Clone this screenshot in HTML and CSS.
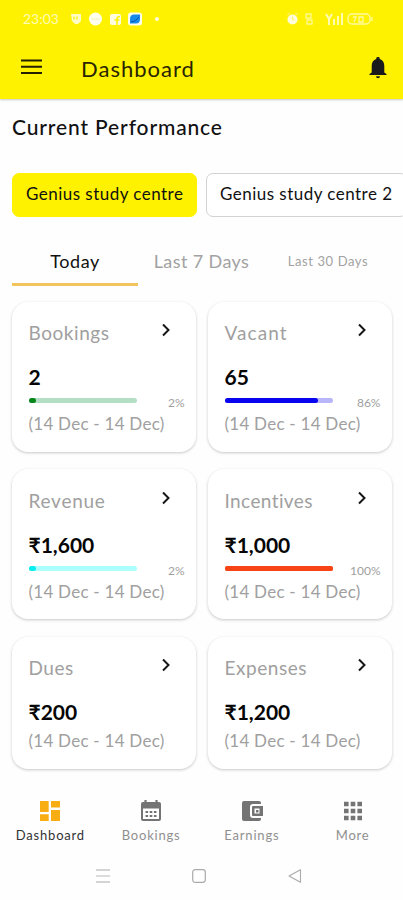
FILE: index.html
```
<!DOCTYPE html>
<html lang="en">
<head>
<meta charset="utf-8">
<title>Dashboard</title>
<link rel="stylesheet" href="styles.css">
</head>
<body>
<header class="top">
  <div class="status">
    <span class="clock">23:03</span>
    <svg class="apps" width="92" height="14" viewBox="0 0 92 14">
      <path d="M2 2h10v7l-3 3H6L3 9z" fill="#fffcc5"/><path d="M5 4.500v3M8 4.500v3" stroke="#fff200" stroke-width="1.300"/>
      <circle cx="26.500" cy="7" r="6.500" fill="#fffff0"/><path d="M22.500 7h8" stroke="#f3efb2"/>
      <rect x="41" y="2" width="11" height="11" rx="2" fill="#fffde0"/><path d="M48 13V6.500q0-2 3-2M45.500 8h5" fill="none" stroke="#fff200" stroke-width="1.600"/>
      <rect x="59" y="0.500" width="14" height="13" rx="3" fill="#fffff0"/><path d="M61 11.500V7q0-4.500 4-4.500h6v4.500q0 4.500-4 4.500z" fill="#168bea"/><path d="M62 10q5 0 8-5" stroke="#0754ae" fill="none"/>
      <circle cx="88" cy="7" r="2" fill="#fffde0"/>
    </svg>
    <svg class="signals" width="88" height="14" viewBox="0 0 88 14">
      <circle cx="5.500" cy="7.500" r="5" fill="#fffde0"/><path d="M5.500 4.500v3l2 1M.5 3l2-2M10.500 3L8.500 1" fill="none" stroke="#fff36b" stroke-width="1.200"/>
      <path d="M19 2h5v4h-5zM20 8h5v4h-5z" fill="none" stroke="#fff990" stroke-width="1.300"/>
      <path d="M39 2l3 5 3-5M42 7v6M47 13V7M51 13V4M55 13V1" fill="none" stroke="#fffbb0" stroke-width="2"/>
      <rect x="61" y="2" width="22" height="10" rx="4" fill="none" stroke="#fffaa0" stroke-width="1.400"/><path d="M66 5h3l-2 5M72 5h4v5h-4zM85 5v4" fill="none" stroke="#fffaa0" stroke-width="1.300"/>
    </svg>
  </div>
  <div class="appbar">
    <svg class="menu" width="22" height="16" viewBox="0 0 22 16"><path d="M0 1.500h21M0 7.800h21M0 14h21" stroke="#222000" stroke-width="1.900"/></svg>
    <h1>Dashboard</h1>
    <svg class="bell" width="18" height="22" viewBox="0 0 18 22"><path d="M9 0a1.700 1.700 0 0 0-1.700 2C4.300 2.800 2.700 5.500 2.700 9v6.500L.5 17v1h17v-1l-2.200-1.500V9c0-3.500-1.600-6.200-4.600-7A1.700 1.700 0 0 0 9 0z" fill="#1a1a1c"/><path d="M7 19.300h4a2 2 0 0 1-4 0z" fill="#1a1a1c"/></svg>
  </div>
</header>
<main>
  <h2>Current Performance</h2>
  <div class="chips">
    <div class="chip chip-on"><span>Genius study centre</span></div>
    <div class="chip chip-next"><span>Genius study centre 2</span></div>
  </div>
  <div class="tabs">
    <div class="tab tab-on"><span>Today</span></div>
    <div class="tab tab-week"><span>Last 7 Days</span></div>
    <div class="tab tab-month"><span>Last 30 Days</span></div>
  </div>
  <div class="grid">
    <section class="card">
      <div class="head"><span class="w-bookings">Bookings</span><svg class="chev" width="10" height="14" viewBox="0 0 10 14"><path d="M2 1.500l5.500 5.500L2 12.500" /></svg></div>
      <div class="value">2</div>
      <div class="meter"><div class="track green"><i style="width:7px"></i></div><span>2%</span></div>
      <div class="date">(14 Dec - 14 Dec)</div>
    </section>
    <section class="card">
      <div class="head"><span class="w-vacant">Vacant</span><svg class="chev" width="10" height="14" viewBox="0 0 10 14"><path d="M2 1.500l5.500 5.500L2 12.500" /></svg></div>
      <div class="value">65</div>
      <div class="meter"><div class="track blue"><i style="width:87%"></i></div><span>86%</span></div>
      <div class="date">(14 Dec - 14 Dec)</div>
    </section>
    <section class="card">
      <div class="head"><span class="w-revenue">Revenue</span><svg class="chev" width="10" height="14" viewBox="0 0 10 14"><path d="M2 1.500l5.500 5.500L2 12.500" /></svg></div>
      <div class="value money">₹1,600</div>
      <div class="meter"><div class="track cyan"><i style="width:7px"></i></div><span>2%</span></div>
      <div class="date">(14 Dec - 14 Dec)</div>
    </section>
    <section class="card">
      <div class="head"><span class="w-incentives">Incentives</span><svg class="chev" width="10" height="14" viewBox="0 0 10 14"><path d="M2 1.500l5.500 5.500L2 12.500" /></svg></div>
      <div class="value money">₹1,000</div>
      <div class="meter"><div class="track red"><i style="width:100%"></i></div><span>100%</span></div>
      <div class="date">(14 Dec - 14 Dec)</div>
    </section>
    <section class="card short">
      <div class="head"><span class="w-dues">Dues</span><svg class="chev" width="10" height="14" viewBox="0 0 10 14"><path d="M2 1.500l5.500 5.500L2 12.500" /></svg></div>
      <div class="value money">₹200</div>
      <div class="date">(14 Dec - 14 Dec)</div>
    </section>
    <section class="card short">
      <div class="head"><span class="w-expenses">Expenses</span><svg class="chev" width="10" height="14" viewBox="0 0 10 14"><path d="M2 1.500l5.500 5.500L2 12.500" /></svg></div>
      <div class="value money">₹1,200</div>
      <div class="date">(14 Dec - 14 Dec)</div>
    </section>
  </div>
</main>
<nav class="bottom">
  <div class="item active">
    <svg width="22" height="22" viewBox="0 0 22 22" fill="#f8ae13"><path d="M1 1h8.700v11H1zM12 1h9v6.500h-9zM1 14.300h8.700V21H1zM12 10h9v11h-9z"/></svg>
    <span>Dashboard</span>
  </div>
  <div class="item">
    <svg width="22" height="24" viewBox="0 0 22 24"><path d="M3 3h16q2 0 2 2v15q0 2-2 2H3q-2 0-2-2V5q0-2 2-2z" fill="#747474"/><path d="M5.500 1v4M16.500 1v4" stroke="#747474" stroke-width="2.200"/><path d="M3 9.500h16V20H3z" fill="#fff"/><path d="M5.500 13h11M5.500 17h11" stroke="#747474" stroke-width="2.200" stroke-dasharray="2.600 1.600"/></svg>
    <span>Bookings</span>
  </div>
  <div class="item">
    <svg width="24" height="22" viewBox="0 0 24 22"><path d="M4 1h15q2 0 2 2v1h-8q-3 0-3 3v8q0 3 3 3h8v1q0 2-2 2H4q-2 0-2-2V3q0-2 2-2z" fill="#747474"/><path d="M13 6h10v10H13q-1 0-1-1V7q0-1 1-1z" fill="#747474"/><rect x="14.500" y="8.500" width="5" height="5" fill="#fff"/><rect x="16" y="10" width="2.500" height="2.500" fill="#747474"/></svg>
    <span>Earnings</span>
  </div>
  <div class="item">
    <svg width="20" height="22" viewBox="0 0 20 22"><path d="M1 4h18M1 11h18M1 18h18" stroke="#747474" stroke-width="4.400" stroke-dasharray="4.600 2.100"/></svg>
    <span>More</span>
  </div>
</nav>
<footer class="system">
  <svg width="14" height="14" viewBox="0 0 14 14"><path d="M0 1h14M0 13h14" stroke="#aaa" stroke-width="1.200"/><path d="M0 7h14" stroke="#ccc" stroke-width="1.400"/></svg>
  <svg width="14" height="14" viewBox="0 0 14 14"><rect x=".7" y=".7" width="12.600" height="12.600" rx="2.500" fill="none" stroke="#aaa" stroke-width="1.200"/></svg>
  <svg width="14" height="14" viewBox="0 0 14 14"><path d="M1 7l11.500-6.200v12.400z" fill="none" stroke="#aaa" stroke-width="1.100" stroke-linejoin="round"/></svg>
</footer>
</body>
</html>
```
FILE: styles.css
```
* { box-sizing: border-box; }
body { margin: 0; width: 403px; height: 900px; overflow: hidden; background: #fefefe; font-family: Lato, sans-serif; color: #111; display: flex; flex-direction: column; }
svg { display: block; flex: none; }
span, h1, h2 { white-space: nowrap; }
.top { height: 99px; flex: none; background: #fff200; box-shadow: 0 1px 2px rgba(0,0,0,.22); }
.status { height: 37px; display: flex; align-items: center; padding: 0 28px 0 23px; }
.clock { width: 46px; font-size: 14px; color: #fffcb8; }
.signals { margin-left: auto; }
.appbar { height: 62px; display: flex; align-items: center; padding: 0 16px 0 21px; }
.menu { margin-bottom: 2px; }
h1 { margin: 1px 0 0 38px; font-size: 22px; font-weight: 400; line-height: 28px; letter-spacing: 1px; color: #282500; }
.bell { margin-left: auto; }
main { height: 689px; flex: none; display: flex; flex-direction: column; }
h2 { margin: 13px 0 0 12px; font-size: 21px; font-weight: 500; line-height: 30px; letter-spacing: .86px; }
.chips { display: flex; gap: 9px; margin: 31px 0 0 12px; overflow: hidden; width: 391px; }
.chip { width: 185px; height: 44px; flex: none; border-radius: 7px; border: 1px solid #d2d2d2; padding: 0 13px; font-size: 17px; line-height: 39px; letter-spacing: .47px; background: #fff; }
.chip-on { background: #fff200; border-color: #fff200; }
.chip-next { width: 201px; }
.tabs { display: grid; grid-template-columns: 126px 127px 126px; margin: 26px 0 0 12px; height: 43px; }
.tab { text-align: center; font-size: 18px; line-height: 36px; color: #a2a2a2; letter-spacing: .4px; }
.tab-on { color: #111; border-bottom: 3px solid #f2c45e; letter-spacing: .6px; }
.tab-month { font-size: 13px; letter-spacing: .6px; }
.grid { display: grid; grid-template-columns: 184px 184px; gap: 17.500px 12px; margin: 15.500px 0 0 11.500px; }
.card { height: 150px; border-radius: 16px; background: #fff; box-shadow: 0 1px 3px rgba(0,0,0,.22); padding: 16.500px 11px 0 17px; }
.short { height: 132px; }
.head { display: flex; justify-content: space-between; height: 30px; font-size: 19px; line-height: 30px; color: #a0a0a0; padding-right: 14px; letter-spacing: .55px; }
.w-vacant { letter-spacing: 1.050px; }
.w-revenue { letter-spacing: .75px; }
.w-incentives { letter-spacing: .4px; }
.chev { margin-top: 5px; fill: none; stroke: #161616; stroke-width: 2; }
.value { margin-top: 13px; height: 34px; line-height: 32px; font-size: 21px; font-weight: 700; color: #050505; }
.meter { height: 10px; display: flex; justify-content: space-between; color: #a0a0a0; font-size: 12px; line-height: 12px; }
.track { width: 108px; height: 5px; margin-top: 3px; border-radius: 3px; flex: none; }
.track i { display: block; height: 5px; border-radius: 3px; }
.green { background: #b5dfc4; } .green i { background: #078619; }
.blue { background: #b9b5fb; } .blue i { background: #0804ef; }
.cyan { background: #acffff; } .cyan i { background: #08eeee; }
.red { background: #f64416; } .red i { background: #f64416; }
.date { height: 24px; line-height: 24px; margin-top: 7px; font-size: 17px; letter-spacing: .25px; color: #a0a0a0; white-space: nowrap; }
.meter span { margin-top: 2px; }
.short .date { margin-top: -1px; }
.bottom { display: grid; grid-template-columns: repeat(4, 1fr); height: 63px; flex: none; background: #fefefe; }
.item { display: flex; flex-direction: column; align-items: center; padding-top: 11px; font-size: 13px; line-height: 16px; color: #909090; }
.item svg { height: 24px; }
.item span { margin-top: 4px; letter-spacing: .8px; }
.active { color: #333; }
.system { height: 49px; flex: none; display: flex; justify-content: center; gap: 82px; padding: 18px 5px 0 0; background: #fefefe; }
```
